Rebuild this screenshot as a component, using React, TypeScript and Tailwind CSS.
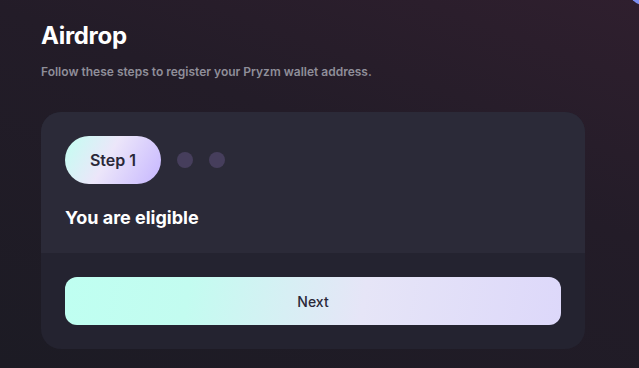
import React from "react";

export default function App() {
  return (
    <div
      className="relative w-[639px] h-[368px] overflow-hidden bg-[linear-gradient(200deg,#2f1f2e_0%,#231c28_40%,#1c1b24_100%)]"
      style={{ fontFamily: "Inter, 'Noto Sans', sans-serif" }}
    >
      <div className="absolute -right-[28px] -top-[34px] w-[40px] h-[40px] rounded-full bg-[#7d8ef0]" />
      <div className="relative flex flex-col px-[41px] pt-[20px]">
        <h1 className="text-[24px] leading-[32px] font-bold text-white tracking-[-0.3px]">Airdrop</h1>
        <p className="mt-[12px] text-[12px] leading-[16px] font-semibold text-[#8f8e99]">
          Follow these steps to register your Pryzm wallet address.
        </p>
        <div className="mt-[32px] w-[544px] rounded-[20px] overflow-hidden bg-[#242330]">
          <div className="bg-[#2b2a38] px-6 pt-6 pb-[21px]">
            <div className="flex items-center gap-4">
              <div className="flex h-12 w-24 items-center justify-center rounded-full bg-[linear-gradient(120deg,#c2fff1_0%,#ece6fa_45%,#c6b6ff_100%)] text-[16px] font-semibold text-[#2a2838]">
                Step 1
              </div>
              <div className="h-4 w-4 rounded-full bg-[#463e5c]" />
              <div className="h-4 w-4 rounded-full bg-[#463e5c]" />
            </div>
            <h2 className="mt-5 text-[18px] leading-7 font-bold text-white">You are eligible</h2>
          </div>
          <div className="px-6 py-6">
            <button className="flex h-12 w-full items-center justify-center rounded-[12px] bg-[linear-gradient(100deg,#bffff1_0%,#c3fcf0_25%,#e6e5f7_60%,#ddd8fa_100%)] text-[14px] font-medium text-[#2a2838]">
              Next
            </button>
          </div>
        </div>
      </div>
    </div>
  );
}
